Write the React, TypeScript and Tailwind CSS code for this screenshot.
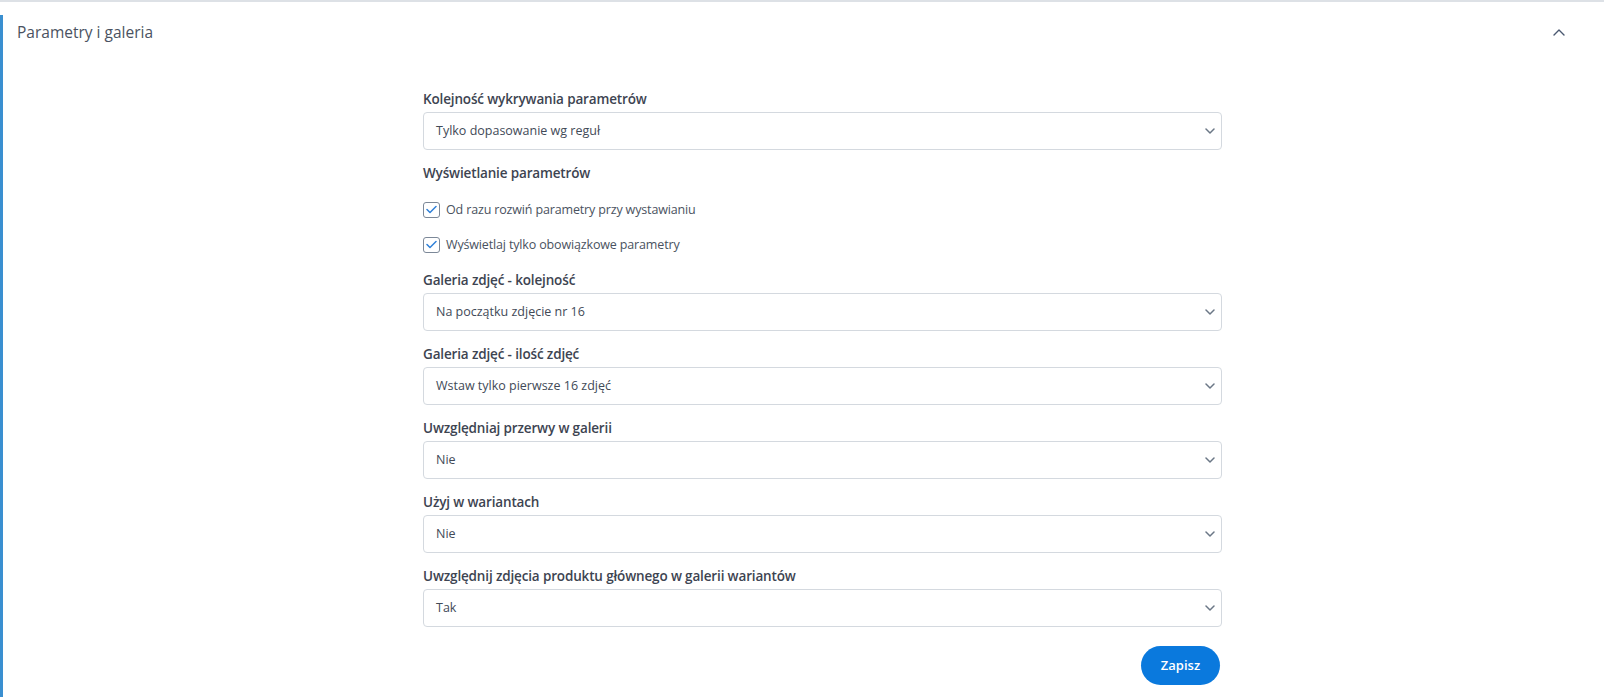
import React from "react";

function ChevronDown() {
  return (
    <svg width="10" height="6" viewBox="0 0 10 6" fill="none" className="shrink-0">
      <path d="M1 1l4 4 4-4" stroke="#6b7786" strokeWidth="1.5" strokeLinecap="round" strokeLinejoin="round" />
    </svg>
  );
}

function Select({ value }: { value: string }) {
  return (
    <div className="mt-[2px] h-[38px] border border-[#d4d9df] rounded-[4px] flex items-center justify-between pl-[12px] pr-[6px] text-[12.5px] text-[#424a57] bg-white">
      <span>{value}</span>
      <ChevronDown />
    </div>
  );
}

function Label({ children }: { children: React.ReactNode }) {
  return (
    <div className="text-[13.5px] tracking-[-0.15px] font-semibold leading-[21px] text-[#3d4451]">{children}</div>
  );
}

function Field({ label, value }: { label: string; value: string }) {
  return (
    <div className="mb-[13px]">
      <Label>{label}</Label>
      <Select value={value} />
    </div>
  );
}

function Checkbox({ text }: { text: string }) {
  return (
    <div className="flex items-center gap-[6px] h-[21px]">
      <div className="w-[17px] h-[16px] border border-[#7c8898] rounded-[3px] flex items-center justify-center bg-white">
        <svg width="11" height="9" viewBox="0 0 11 9" fill="none">
          <path d="M1 4.5l3 3L10 1.5" stroke="#2f80d8" strokeWidth="1.5" strokeLinecap="round" strokeLinejoin="round" />
        </svg>
      </div>
      <span className="text-[12.5px] tracking-[-0.15px] text-[#4a5260] leading-[21px]">{text}</span>
    </div>
  );
}

export default function App() {
  return (
    <div className="min-h-[697px] bg-white border-t-2 border-[#dde1e6] flex font-['Open_Sans',sans-serif]">
      <div className="w-[3px] mt-[13px] bg-[#3a8fd0] shrink-0" />
      <div className="flex-1 flex flex-col">
        <div className="flex items-center justify-between pl-[14px] pr-[39px] pt-[18px]">
          <span className="text-[15.5px] leading-[24px] text-[#4a5261]">Parametry i galeria</span>
          <svg width="12" height="7" viewBox="0 0 12 7" fill="none">
            <path d="M1 6l5-5 5 5" stroke="#4a5870" strokeWidth="1.4" strokeLinecap="round" strokeLinejoin="round" />
          </svg>
        </div>
        <div className="ml-[420px] w-[799px] mt-[45px] flex flex-col pb-[11px]">
          <Field label="Kolejność wykrywania parametrów" value="Tylko dopasowanie wg reguł" />
          <Label>Wyświetlanie parametrów</Label>
          <div className="mt-[15px]">
            <Checkbox text="Od razu rozwiń parametry przy wystawianiu" />
          </div>
          <div className="mt-[14px] mb-[15px]">
            <Checkbox text="Wyświetlaj tylko obowiązkowe parametry" />
          </div>
          <Field label="Galeria zdjęć - kolejność" value="Na początku zdjęcie nr 16" />
          <Field label="Galeria zdjęć - ilość zdjęć" value="Wstaw tylko pierwsze 16 zdjęć" />
          <Field label="Uwzględniaj przerwy w galerii" value="Nie" />
          <Field label="Użyj w wariantach" value="Nie" />
          <Field label="Uwzględnij zdjęcia produktu głównego w galerii wariantów" value="Tak" />
          <div className="flex justify-end mt-[6px]">
            <button className="h-[39px] w-[79px] mr-[2px] rounded-full bg-[#0a79dd] text-white text-[13px] font-semibold">
              Zapisz
            </button>
          </div>
        </div>
      </div>
    </div>
  );
}
